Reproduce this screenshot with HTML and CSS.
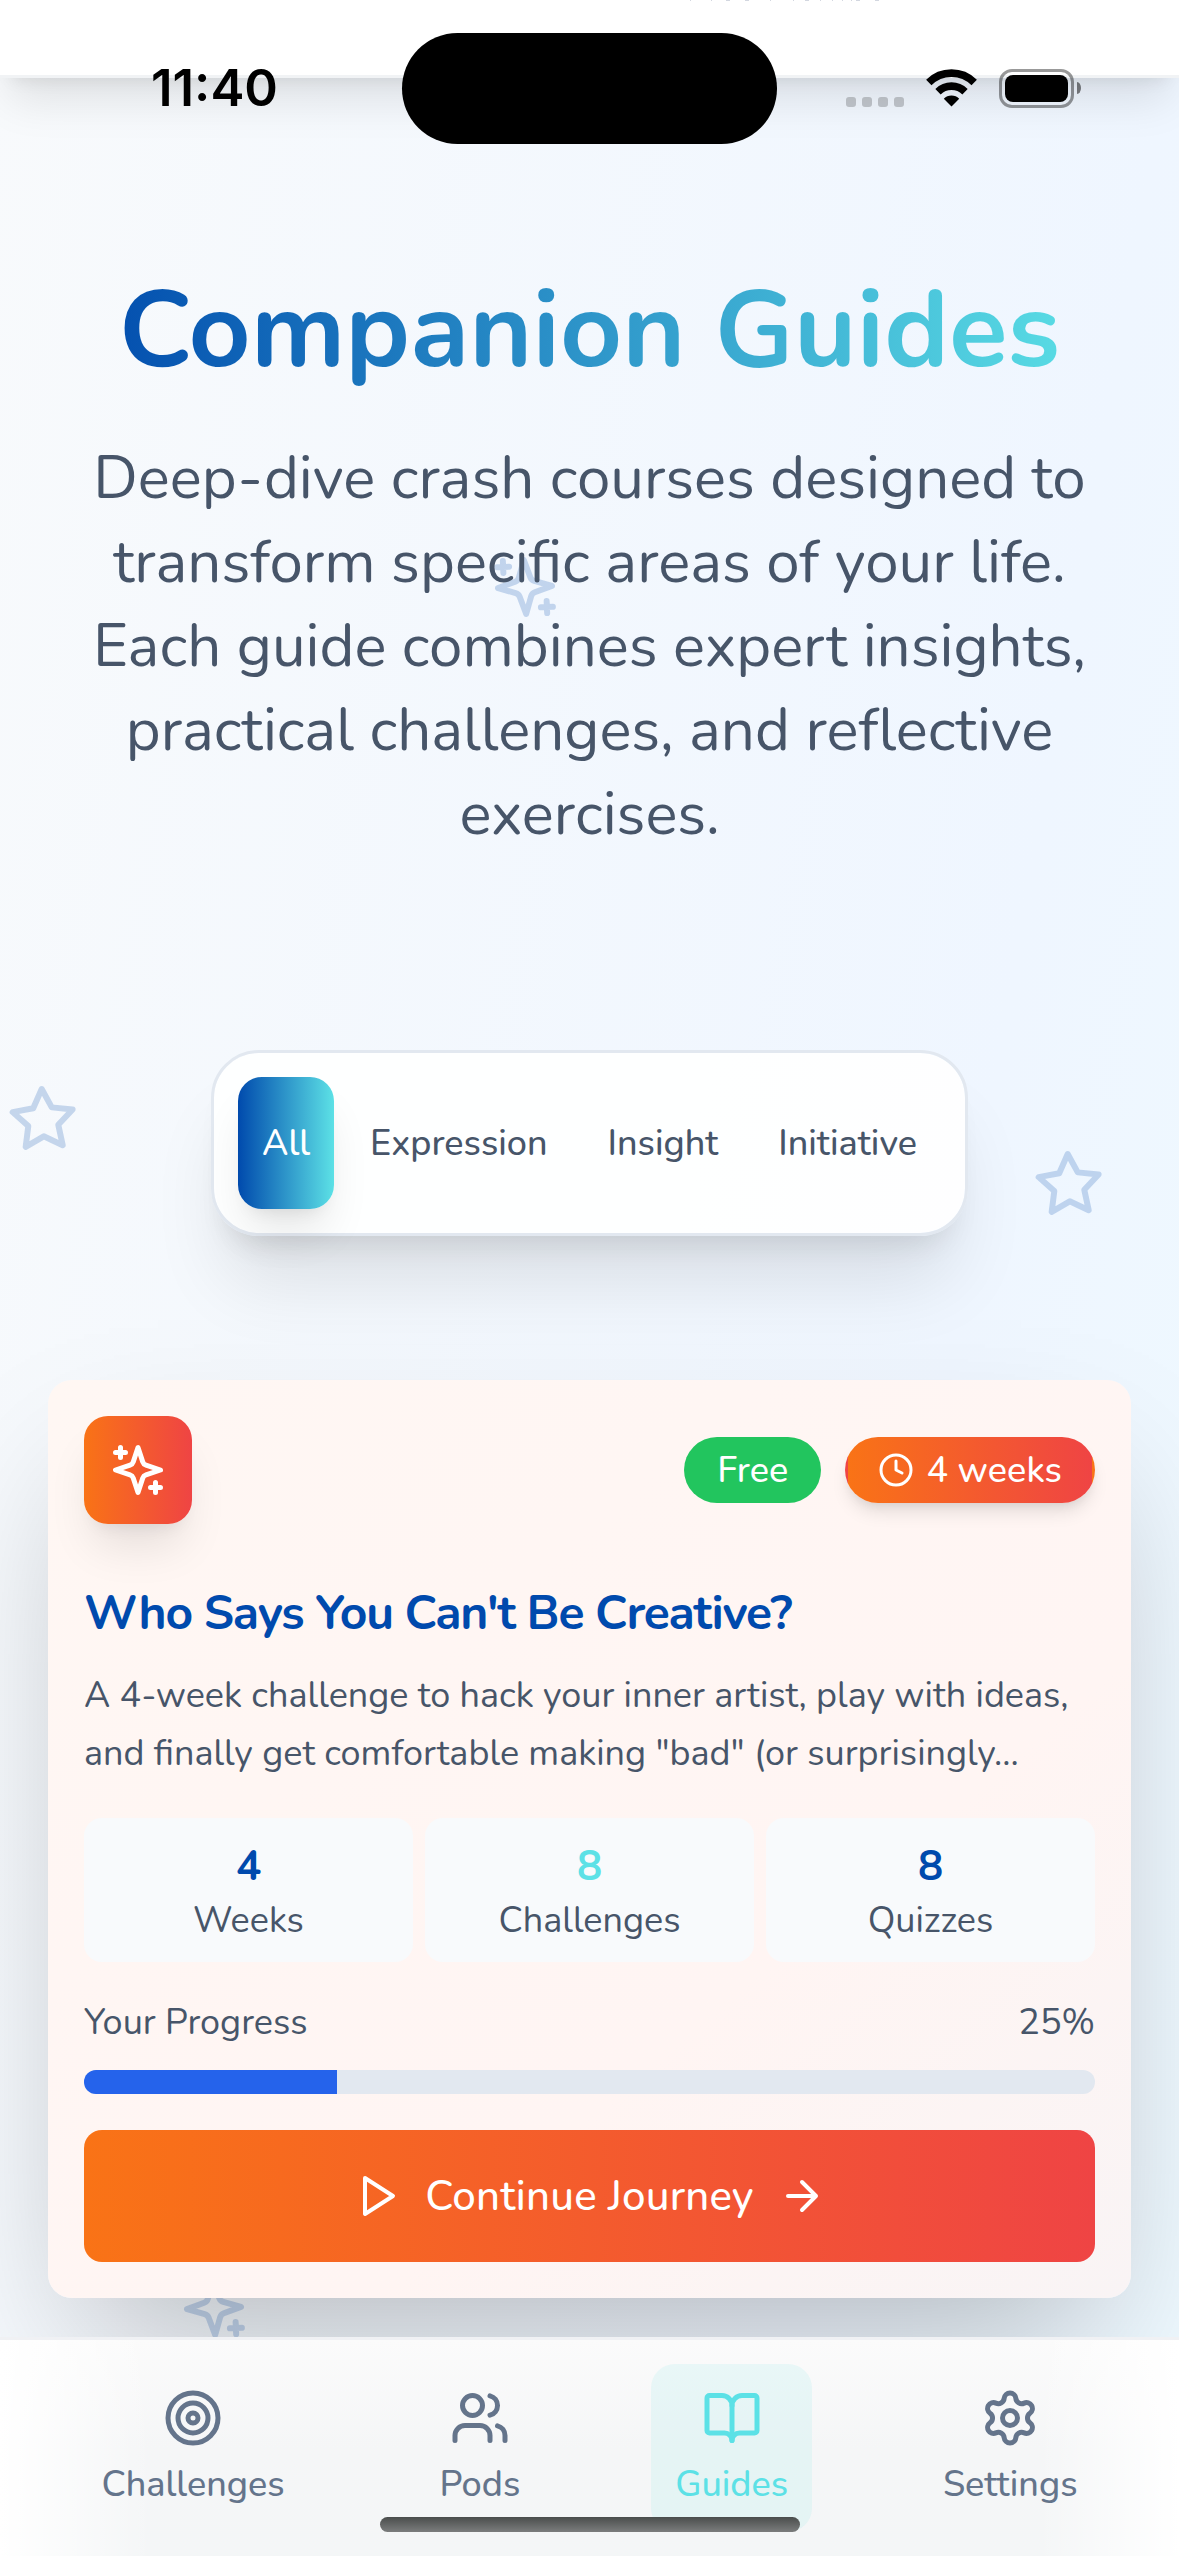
FILE: index.html
```html
<!DOCTYPE html>
<html lang="en">
<head>
<meta charset="utf-8">
<meta name="viewport" content="width=1179">
<title>Companion Guides</title>
<link rel="stylesheet" href="styles.css">
</head>
<body>
<svg width="0" height="0" class="defs" aria-hidden="true">
  <symbol id="sparkles" viewBox="0 0 24 24">
    <path d="m12 3-1.912 5.813a2 2 0 0 1-1.275 1.275L3 12l5.813 1.912a2 2 0 0 1 1.275 1.275L12 21l1.912-5.813a2 2 0 0 1 1.275-1.275L21 12l-5.813-1.912a2 2 0 0 1-1.275-1.275L12 3Z"/>
    <path d="M5 3v4M19 17v4M3 5h4M17 19h4"/>
  </symbol>
  <symbol id="star" viewBox="0 0 24 24">
    <polygon points="12 2 15.09 8.26 22 9.27 17 14.14 18.18 21.02 12 17.77 5.82 21.02 7 14.14 2 9.27 8.91 8.26 12 2"/>
  </symbol>
</svg>

<div class="page">
  <svg class="icon floating float-hero"><use href="#sparkles"/></svg>
  <svg class="icon floating float-left"><use href="#star"/></svg>
  <svg class="icon floating float-right"><use href="#star"/></svg>
  <svg class="icon floating float-bottom"><use href="#sparkles"/></svg>

  <header class="topbar">
    <svg class="topbar-edge" viewBox="0 0 200 1"><path d="M0 .5h1M21 .5h1M36 .5h4M55 .5h4M80 .5h1M103 .5h1M115 .5h4M130 .5h1M142 .5h1M152 .5h1M161 .5h1M166 .5h4M185 .5h4"/></svg>
  </header>

  <main class="content">
    <section class="hero">
      <h1 class="hero-title">Companion Guides</h1>
      <p class="hero-text">Deep-dive crash courses designed to transform specific areas of your life. Each guide combines expert insights, practical challenges, and reflective exercises.</p>
    </section>

    <div class="tabs">
      <button class="tab tab-active">All</button>
      <button class="tab">Expression</button>
      <button class="tab">Insight</button>
      <button class="tab">Initiative</button>
    </div>

    <article class="card">
      <div class="card-head">
        <div class="card-icon"><svg class="icon"><use href="#sparkles"/></svg></div>
        <div class="badges">
          <span class="badge badge-free">Free</span>
          <span class="badge badge-time">
            <svg class="icon" viewBox="0 0 24 24"><circle cx="12" cy="12" r="10"/><path d="M12 6v6l4 2"/></svg>
            4 weeks
          </span>
        </div>
      </div>
      <h2 class="card-title">Who Says You Can't Be Creative?</h2>
      <p class="card-text">A 4-week challenge to hack your inner artist, play with ideas, and finally get comfortable making "bad" (or surprisingly...</p>
      <div class="stats">
        <div class="stat"><span class="stat-value">4</span><span class="stat-label">Weeks</span></div>
        <div class="stat"><span class="stat-value stat-value-cyan">8</span><span class="stat-label">Challenges</span></div>
        <div class="stat"><span class="stat-value">8</span><span class="stat-label">Quizzes</span></div>
      </div>
      <div class="progress-row"><span>Your Progress</span><span>25%</span></div>
      <div class="progress"><div class="progress-fill" style="width: 25%"></div></div>
      <button class="cta">
        <svg class="icon" viewBox="0 0 24 24"><polygon points="6 3 20 12 6 21 6 3"/></svg>
        Continue Journey
        <svg class="icon" viewBox="0 0 24 24"><path d="M5 12h14M12 5l7 7-7 7"/></svg>
      </button>
    </article>
  </main>

  <nav class="nav">
    <a class="nav-item">
      <svg class="icon" viewBox="0 0 24 24"><circle cx="12" cy="12" r="10"/><circle cx="12" cy="12" r="6"/><circle cx="12" cy="12" r="2"/></svg>
      Challenges
    </a>
    <a class="nav-item">
      <svg class="icon" viewBox="0 0 24 24"><path d="M16 21v-2a4 4 0 0 0-4-4H6a4 4 0 0 0-4 4v2"/><circle cx="9" cy="7" r="4"/><path d="M22 21v-2a4 4 0 0 0-3-3.87M16 3.13a4 4 0 0 1 0 7.75"/></svg>
      Pods
    </a>
    <a class="nav-item nav-item-active">
      <svg class="icon" viewBox="0 0 24 24"><path d="M12 7v14"/><path d="M3 18a1 1 0 0 1-1-1V4a1 1 0 0 1 1-1h5a4 4 0 0 1 4 4 4 4 0 0 1 4-4h5a1 1 0 0 1 1 1v13a1 1 0 0 1-1 1h-6a3 3 0 0 0-3 3 3 3 0 0 0-3-3z"/></svg>
      Guides
    </a>
    <a class="nav-item">
      <svg class="icon" viewBox="0 0 24 24"><path d="M9.671 4.136a2.34 2.34 0 0 1 4.659 0 2.34 2.34 0 0 0 3.319 1.915 2.34 2.34 0 0 1 2.33 4.033 2.34 2.34 0 0 0 0 3.831 2.34 2.34 0 0 1-2.33 4.033 2.34 2.34 0 0 0-3.319 1.915 2.34 2.34 0 0 1-4.659 0 2.34 2.34 0 0 0-3.32-1.915 2.34 2.34 0 0 1-2.33-4.033 2.34 2.34 0 0 0 0-3.831A2.34 2.34 0 0 1 6.35 6.051a2.34 2.34 0 0 0 3.319-1.915"/><circle cx="12" cy="12" r="3"/></svg>
      Settings
    </a>
  </nav>

  <div class="home-indicator"></div>

  <div class="statusbar">
    <span class="clock">11:40</span>
    <div class="island"></div>
    <div class="status-icons">
      <div class="signal"><i></i><i></i><i></i><i></i></div>
      <svg class="wifi" viewBox="0 0 51 38">
        <path d="M25.500 37.500 L17.800 29.800 A10.900 10.900 0 0 1 33.200 29.800 Z"/>
        <path class="wifi-arc" d="M12 22.700 A19.200 19.200 0 0 1 39 22.700"/>
        <path class="wifi-arc" d="M2.800 13.500 A32.200 32.200 0 0 1 48.200 13.500"/>
      </svg>
      <div class="battery"><div class="battery-level"></div></div>
    </div>
  </div>
</div>
</body>
</html>
```
FILE: styles.css
```css
:root {
  --blue: #004aad;
  --cyan: #5ce1e6;
  --slate: #475569;
  --orange: #f97316;
  --red: #ef4444;
}

* { box-sizing: border-box; margin: 0; padding: 0; }

body {
  width: 1179px;
  height: 2556px;
  overflow: hidden;
  font-family: "Nunito", "Lato", sans-serif;
  font-size: 36px;
  color: var(--slate);
}

button { font: inherit; border: 0; }

.defs { position: absolute; }

.icon {
  fill: none;
  stroke: currentColor;
  stroke-width: 2;
  stroke-linecap: round;
  stroke-linejoin: round;
  flex: none;
}

.page {
  position: relative;
  width: 1179px;
  height: 2556px;
  overflow: hidden;
  background: linear-gradient(to bottom right, #f8fafc, #eff6ff 50%, #ecfeff) 0 0 / 1179px 7000px no-repeat;
}

/* Decorative icons drifting behind the content */
.floating {
  position: absolute;
  width: 72px;
  height: 72px;
  color: var(--blue);
  opacity: 0.2;
  transform: rotate(-2.5deg);
}
.float-hero { left: 489px; top: 551px; }
.float-left { left: 7px; top: 1083px; }
.float-right { left: 1033px; top: 1148px; }
.float-bottom { left: 178px; top: 2272px; }

.topbar {
  position: relative;
  height: 78px;
  background: #fff;
  border-bottom: 3px solid #f1f3f5;
  box-shadow: 0 30px 45px -9px rgba(0, 0, 0, 0.1), 0 12px 18px -12px rgba(0, 0, 0, 0.1);
}
.topbar-edge {
  display: block;
  width: 200px;
  height: 1px;
  margin-left: 690px;
  stroke: #d3d7e0;
  stroke-width: 1;
}

.content {
  position: relative;
  display: flex;
  flex-direction: column;
  align-items: center;
  padding: 193px 48px 0;
}

.hero {
  width: 100%;
  padding: 0 24px;
  text-align: center;
}
.hero-title {
  font-size: 108px;
  font-weight: 700;
  line-height: 120px;
  margin-bottom: -7px;
  padding-bottom: 52px;
  background: linear-gradient(to right, var(--blue), var(--cyan));
  -webkit-background-clip: text;
  background-clip: text;
  color: transparent;
}
.hero-text {
  font-size: 60px;
  line-height: 84px;
}

.tabs {
  display: flex;
  gap: 12px;
  margin-top: 194px;
  padding: 24px;
  border: 3px solid #e2e8f0;
  border-radius: 48px;
  background: rgba(255, 255, 255, 0.9);
  background-clip: padding-box;
  box-shadow: 0 60px 75px -15px rgba(0, 0, 0, 0.1), 0 24px 30px -18px rgba(0, 0, 0, 0.1);
}
.tab {
  height: 132px;
  padding: 0 24px;
  border-radius: 24px;
  background: none;
  font-weight: 500;
  color: var(--slate);
}
.tab-active {
  color: #fff;
  background: linear-gradient(to right, var(--blue), var(--cyan));
  box-shadow: 0 30px 45px -9px rgba(0, 0, 0, 0.1), 0 12px 18px -12px rgba(0, 0, 0, 0.1);
}

.card {
  width: 100%;
  height: 918px;
  margin-top: 144px;
  padding: 36px;
  border-radius: 24px;
  background: linear-gradient(to bottom right, #fff7f3, #fff5f3 65%, #f9f4f5);
  box-shadow: 0 75px 150px -36px rgba(0, 0, 0, 0.25);
}
.card-head {
  display: flex;
  align-items: center;
  justify-content: space-between;
}
.card-icon {
  display: grid;
  place-items: center;
  width: 108px;
  height: 108px;
  border-radius: 24px;
  color: #fff;
  background: linear-gradient(to right, var(--orange), var(--red));
  box-shadow: 0 30px 45px -9px rgba(0, 0, 0, 0.1), 0 12px 18px -12px rgba(0, 0, 0, 0.1);
}
.card-icon .icon { width: 60px; height: 60px; }

.badges { display: flex; gap: 24px; }
.badge {
  display: flex;
  align-items: center;
  gap: 12px;
  height: 66px;
  padding: 0 30px;
  border: 3px solid transparent;
  border-radius: 33px;
  font-weight: 500;
  letter-spacing: 0.1px;
  color: #fff;
}
.badge .icon { width: 36px; height: 36px; }
.badge-free { background-color: #22c55e; }
.badge-time {
  background-image: linear-gradient(to right, var(--orange), var(--red));
  box-shadow: 0 12px 18px -3px rgba(0, 0, 0, 0.1), 0 6px 12px -6px rgba(0, 0, 0, 0.1);
}

.card-title {
  margin-top: 59px;
  font-size: 48px;
  font-weight: 700;
  line-height: 60px;
  letter-spacing: -0.025em;
  color: var(--blue);
}
.card-text {
  margin-top: 24px;
  line-height: 58px;
}

.stats {
  display: grid;
  grid-template-columns: repeat(3, 1fr);
  gap: 12px;
  margin-top: 35px;
}
.stat {
  display: flex;
  flex-direction: column;
  align-items: center;
  padding: 19px 18px 17px;
  border-radius: 18px;
  background: #f8fafc;
  line-height: 48px;
}
.stat-value {
  font-size: 42px;
  font-weight: 700;
  line-height: 60px;
  color: var(--blue);
}
.stat-value-cyan { color: var(--cyan); }

.progress-row {
  display: flex;
  justify-content: space-between;
  margin-top: 37px;
  line-height: 48px;
}
.progress {
  height: 24px;
  margin-top: 23px;
  border-radius: 12px;
  overflow: hidden;
  background: #e2e8f0;
}
.progress-fill { height: 100%; background: #2563eb; }

.cta {
  display: flex;
  align-items: center;
  justify-content: center;
  gap: 24px;
  width: 100%;
  height: 132px;
  margin-top: 36px;
  border-radius: 18px;
  font-size: 42px;
  font-weight: 500;
  letter-spacing: 0.2px;
  color: #fff;
  background: linear-gradient(to right, var(--orange), var(--red));
}
.cta .icon { width: 48px; height: 48px; }

.nav {
  position: absolute;
  left: 0;
  right: 0;
  bottom: 0;
  display: flex;
  justify-content: space-around;
  align-items: flex-start;
  height: 219px;
  padding: 24px;
  border-top: 3px solid #f0f1f4;
  background:
    linear-gradient(to right, #fff, rgba(255, 255, 255, 0) 13%, rgba(255, 255, 255, 0) 88%, #fff),
    linear-gradient(to bottom, #fbfbfb, #f5f6f7 50%, #f4f6f7);
  color: #64748b;
}
.nav-item {
  display: flex;
  flex-direction: column;
  align-items: center;
  gap: 13px;
  height: 168px;
  padding: 24px;
  border-radius: 24px;
  font-weight: 500;
  line-height: 48px;
}
.nav-item .icon { width: 60px; height: 60px; }
.nav-item-active {
  color: var(--cyan);
  background: rgba(92, 225, 230, 0.1);
}

.home-indicator {
  position: absolute;
  left: 380px;
  top: 2517px;
  width: 420px;
  height: 15px;
  border-radius: 8px;
  background: linear-gradient(to bottom, #4a4d4c, #7b7d7d);
}

/* System status bar laid over the page */
.statusbar {
  position: absolute;
  inset: 0 0 auto 0;
  display: grid;
  grid-template-columns: 402px 375px 402px;
  align-items: center;
  height: 177px;
  color: #000;
}
.clock {
  padding: 0 0 2px 27px;
  text-align: center;
  font-family: "Inter", sans-serif;
  font-size: 51px;
  font-weight: 600;
}
.island {
  height: 111px;
  border-radius: 56px;
  background: #000;
}
.status-icons {
  display: flex;
  align-items: flex-end;
  height: 39px;
  padding-left: 69px;
}
.signal { display: flex; gap: 6px; margin-bottom: 1px; }
.signal i {
  width: 10px;
  height: 10px;
  border-radius: 3px;
  background: rgba(0, 0, 0, 0.2);
}
.wifi { width: 51px; height: 38px; margin: 0 22px 1px 22px; }
.wifi-arc { fill: none; stroke: #000; stroke-width: 7.6; }
.battery {
  position: relative;
  width: 75px;
  height: 39px;
  padding: 3px;
  border: 3px solid rgba(0, 0, 0, 0.4);
  border-radius: 13px;
}
.battery-level { height: 100%; border-radius: 8px; background: #000; }
.battery::after {
  content: "";
  position: absolute;
  left: 75px;
  top: 10px;
  width: 4px;
  height: 12px;
  border-radius: 0 4px 4px 0 / 0 6px 6px 0;
  background: rgba(0, 0, 0, 0.5);
}
```
